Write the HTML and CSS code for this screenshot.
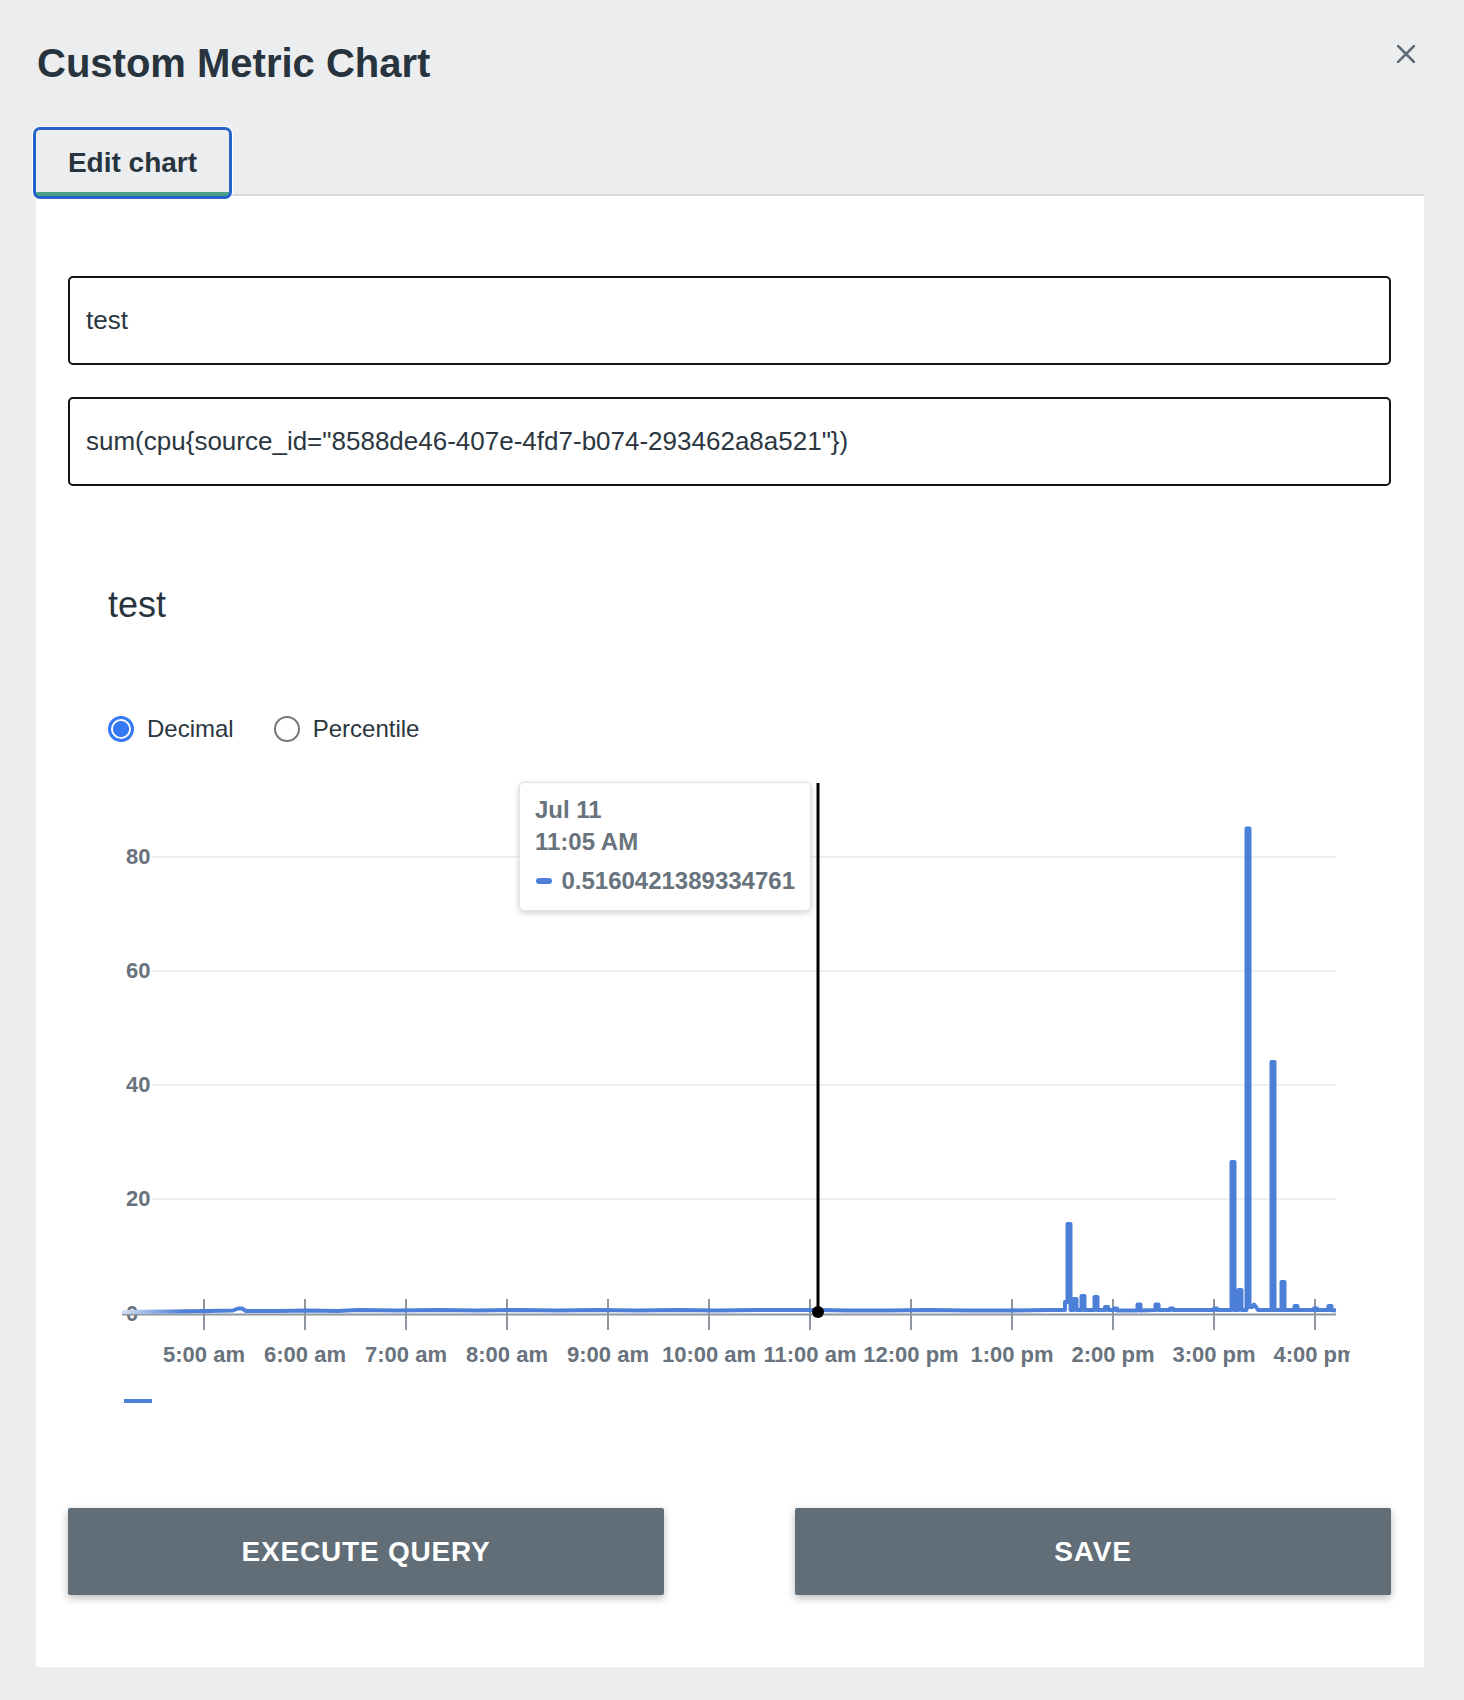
FILE: index.html
```html
<!DOCTYPE html>
<html lang="en">
<head>
<meta charset="utf-8">
<title>Custom Metric Chart</title>
<link rel="stylesheet" href="styles.css">
</head>
<body>
<header class="header">
  <h1 class="title">Custom Metric Chart</h1>
  <button class="close" aria-label="Close">
    <svg width="18" height="18" viewBox="0 0 18 18"><path d="M1 1L17 17M17 1L1 17" stroke="#5f6b76" stroke-width="2.6" stroke-linecap="square"/></svg>
  </button>
</header>
<nav class="tabs">
  <div class="tab">Edit chart</div>
</nav>
<main class="panel">
  <div class="field">test</div>
  <div class="field field-query">sum(cpu{source_id="8588de46-407e-4fd7-b074-293462a8a521"})</div>
  <section class="chart">
    <h2 class="chart-title">test</h2>
    <div class="units">
      <label class="opt"><span class="radio radio-on"></span>Decimal</label>
      <label class="opt"><span class="radio"></span>Percentile</label>
    </div>
    <div class="plot">
      <svg class="plot-svg" width="1242" height="650" viewBox="0 0 1242 650">
        <defs>
          <linearGradient id="fade" gradientUnits="userSpaceOnUse" x1="14" y1="0" x2="1228" y2="0">
            <stop offset="0" stop-color="#d3e0f5"/>
            <stop offset="0.05" stop-color="#4b7fd8"/>
            <stop offset="1" stop-color="#4b7fd8"/>
          </linearGradient>
        </defs>
        <g class="grid">
          <line x1="44" y1="86" x2="1228" y2="86"/>
          <line x1="44" y1="200" x2="1228" y2="200"/>
          <line x1="44" y1="314" x2="1228" y2="314"/>
          <line x1="44" y1="428" x2="1228" y2="428"/>
        </g>
        <g class="axis-label">
          <text x="18" y="93">80</text>
          <text x="18" y="207">60</text>
          <text x="18" y="321">40</text>
          <text x="18" y="435">20</text>
          <text x="18" y="550">0</text>
        </g>
        <g class="ticks">
          <line x1="96" y1="528" x2="96" y2="559"/>
          <line x1="197" y1="528" x2="197" y2="559"/>
          <line x1="298" y1="528" x2="298" y2="559"/>
          <line x1="399" y1="528" x2="399" y2="559"/>
          <line x1="500" y1="528" x2="500" y2="559"/>
          <line x1="601" y1="528" x2="601" y2="559"/>
          <line x1="702" y1="528" x2="702" y2="559"/>
          <line x1="803" y1="528" x2="803" y2="559"/>
          <line x1="904" y1="528" x2="904" y2="559"/>
          <line x1="1005" y1="528" x2="1005" y2="559"/>
          <line x1="1106" y1="528" x2="1106" y2="559"/>
          <line x1="1207" y1="528" x2="1207" y2="559"/>
        </g>
        <line class="axis" x1="14" y1="543.5" x2="1228" y2="543.5"/>
        <path class="series" d="M14,541 L60,540.5 L100,540 L125,539.5 L130,537.5 L134,537.5 L138,540 L170,540 L200,539.5 L230,540 L250,539 L290,539.5 L330,539 L370,539.5 L410,539 L450,539.5 L490,539 L530,539.5 L570,539 L610,539.5 L650,539 L690,539 L712,539 L740,539.5 L780,539.5 L820,539 L860,539.5 L900,539.5 L940,539 L955,539 L957,539 L957,531 L959.5,531 L959.5,453 L962.5,453 L962.5,539 L965.5,539 L965.5,528 L968.5,528 L968.5,539 L973.5,539 L973.5,525 L976.5,525 L976.5,539 L986.5,539 L986.5,526 L989.5,526 L989.5,539 L997,539 L997,536 L1000,536 L1000,539 L1006,539 L1006,537.5 L1009,537.5 L1009,539.5 L1029.5,539.5 L1029.5,533.5 L1032.5,533.5 L1032.5,539.5 L1047.5,539 L1047.5,533.5 L1050.5,533.5 L1050.5,539 L1062,539 L1062,537.5 L1065,537.5 L1065,539 L1106,539 L1106,537.5 L1109,537.5 L1109,539 L1123.5,539 L1123.5,391 L1126.5,391 L1126.5,539 L1130.5,539 L1130.5,519 L1133.5,519 L1133.5,539 L1138.5,539 L1138.5,57.5 L1141.5,57.5 L1141.5,536 L1144,536 L1146,533.5 L1148,536 L1150,539 L1163.5,539 L1163.5,291 L1166.5,291 L1166.5,539 L1173.5,539 L1173.5,511 L1176.5,511 L1176.5,539 L1186.5,539 L1186.5,535 L1189.5,535 L1189.5,539 L1206,539 L1206,537.5 L1209,537.5 L1209,539 L1220.5,539 L1220.5,535 L1223.5,535 L1223.5,539 L1228,539.5"/>
        <g class="axis-label x-labels">
          <text x="96" y="591">5:00 am</text>
          <text x="197" y="591">6:00 am</text>
          <text x="298" y="591">7:00 am</text>
          <text x="399" y="591">8:00 am</text>
          <text x="500" y="591">9:00 am</text>
          <text x="601" y="591">10:00 am</text>
          <text x="702" y="591">11:00 am</text>
          <text x="803" y="591">12:00 pm</text>
          <text x="904" y="591">1:00 pm</text>
          <text x="1005" y="591">2:00 pm</text>
          <text x="1106" y="591">3:00 pm</text>
          <text x="1207" y="591">4:00 pm</text>
        </g>
        <line class="cursor" x1="710" y1="12" x2="710" y2="541"/>
        <circle class="cursor-dot" cx="710" cy="541" r="6"/>
        <rect class="legend" x="16" y="628" width="28" height="4"/>
      </svg>
      <div class="tooltip">
        <div class="tt-line">Jul 11</div>
        <div class="tt-line">11:05 AM</div>
        <div class="tt-line tt-value"><span class="tt-dash"></span>0.5160421389334761</div>
      </div>
    </div>
  </section>
  <div class="actions">
    <button class="btn">EXECUTE QUERY</button>
    <button class="btn">SAVE</button>
  </div>
</main>
</body>
</html>
```
FILE: styles.css
```css
html, body {
  margin: 0;
  padding: 0;
}
body {
  background: #ecedef;
  font-family: "Liberation Sans", Arial, sans-serif;
  color: #28343e;
  width: 1464px;
  min-height: 1700px;
}
.header {
  display: flex;
  justify-content: space-between;
  align-items: flex-start;
  padding: 40px 49px 0 37px;
}
.title {
  margin: 0;
  font-size: 40px;
  line-height: 46px;
  font-weight: bold;
  color: #27333d;
}
.close {
  margin-top: 5px;
  padding: 0;
  border: 0;
  background: none;
  width: 18px;
  height: 18px;
  display: block;
}
.close svg {
  display: block;
}
.tabs {
  margin: 44px 40px 0 36px;
  height: 64px;
  border-bottom: 2px solid #d8d9dc;
  display: flex;
}
.tab {
  box-sizing: border-box;
  width: 193px;
  height: 66px;
  margin-bottom: -2px;
  background: #ecedef;
  border-bottom: 4px solid #4a9e8a;
  border-radius: 4px;
  box-shadow: 0 0 0 3px #2563c9, 0 0 0 4px #ffffff;
  display: flex;
  align-items: center;
  justify-content: center;
  padding-top: 3px;
  font-size: 28px;
  line-height: 32px;
  font-weight: bold;
  color: #28343e;
}
.panel {
  margin: 0 40px 0 36px;
  background: #ffffff;
  padding: 80px 33px 72px 32px;
}
.field {
  box-sizing: border-box;
  height: 89px;
  border: 2px solid #141414;
  border-radius: 5px;
  padding: 0 16px;
  display: flex;
  align-items: center;
  font-size: 26px;
  color: #2b3640;
}
.field-query {
  margin-top: 32px;
}
.chart {
  padding-left: 40px;
}
.chart-title {
  margin: 98px 0 0 0;
  font-size: 36px;
  line-height: 42px;
  font-weight: normal;
  color: #28343e;
}
.units {
  margin-top: 90px;
  display: flex;
  align-items: center;
  height: 26px;
  gap: 40px;
}
.opt {
  display: flex;
  align-items: center;
  gap: 13px;
  font-size: 24px;
  line-height: 26px;
  color: #2b3640;
}
.radio {
  box-sizing: border-box;
  width: 26px;
  height: 26px;
  border-radius: 50%;
  border: 2px solid #767676;
  background: #fff;
  display: inline-block;
}
.radio-on {
  border: 3px solid #3478f6;
  background: radial-gradient(circle, #3478f6 0 7.5px, #ffffff 8.5px);
}
.plot {
  position: relative;
  margin-top: 29px;
  width: 1242px;
  height: 650px;
}
.plot-svg {
  display: block;
  overflow: hidden;
}
.grid line {
  stroke: #eeeff1;
  stroke-width: 2;
}
.ticks line {
  stroke: #8e979f;
  stroke-width: 2;
}
.axis {
  stroke: #8e979f;
  stroke-width: 2;
}
.axis-label {
  font-family: "Liberation Sans", Arial, sans-serif;
  font-size: 22px;
  font-weight: bold;
  fill: #68737d;
}
.x-labels {
  text-anchor: middle;
}
.series {
  fill: none;
  stroke: url(#fade);
  stroke-width: 4;
  stroke-linejoin: round;
}
.cursor {
  stroke: #000;
  stroke-width: 3;
}
.cursor-dot {
  fill: #000;
}
.legend {
  fill: #4b7fd8;
}
.tooltip {
  position: absolute;
  left: 411px;
  top: 11px;
  box-sizing: border-box;
  width: 292px;
  height: 129px;
  background: #ffffff;
  border: 1px solid #e2e3e5;
  border-radius: 5px;
  box-shadow: 0 2px 6px rgba(0, 0, 0, 0.18);
  padding: 11px 15px 0 15px;
}
.tt-line {
  font-size: 24px;
  line-height: 32px;
  font-weight: bold;
  color: #68737d;
  white-space: nowrap;
}
.tt-value {
  margin-top: 7px;
  display: flex;
  align-items: center;
  gap: 9px;
}
.tt-dash {
  display: inline-block;
  width: 18px;
  height: 6px;
  border-radius: 3px;
  background: #4b7fd8;
  margin-left: 1px;
}
.actions {
  margin-top: 87px;
  display: flex;
  justify-content: space-between;
}
.btn {
  width: 596px;
  height: 87px;
  border: 0;
  border-radius: 2px;
  background: #616d77;
  color: #ffffff;
  font-family: "Liberation Sans", Arial, sans-serif;
  font-size: 28px;
  font-weight: bold;
  letter-spacing: 0.8px;
  box-shadow: 0 3px 9px rgba(0, 0, 0, 0.28);
  padding: 0;
}
```
